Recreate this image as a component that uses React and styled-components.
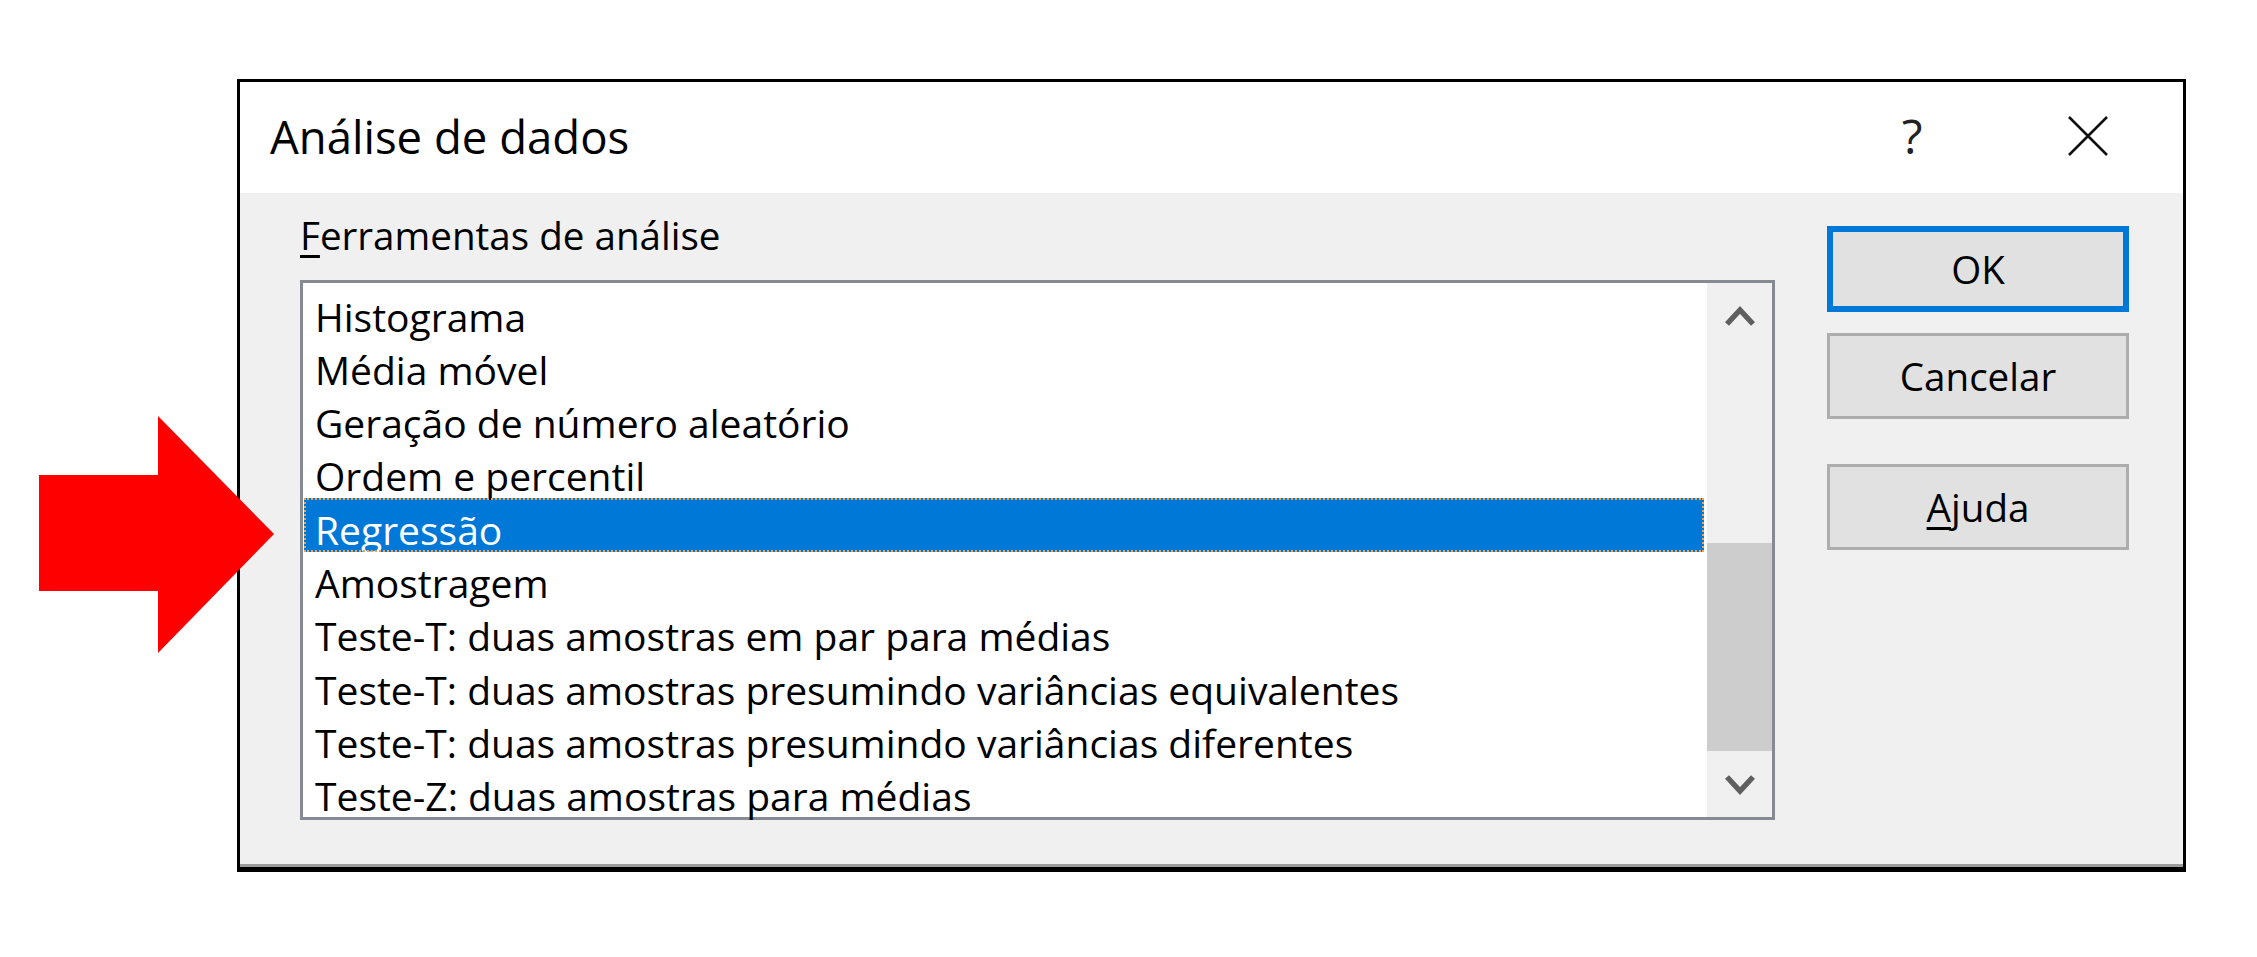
import React from "react";
import styled, { createGlobalStyle } from "styled-components";

const GlobalStyle = createGlobalStyle`
  html, body { margin: 0; padding: 0; background: #ffffff; }
  body { font-family: "Open Sans", "Noto Sans", sans-serif; }
  * { box-sizing: border-box; }
`;

const Page = styled.div`
  position: relative;
  width: 2257px;
  height: 957px;
  padding: 79px 0 0 237px;
`;

const ArrowMark = styled.svg`
  position: absolute;
  left: 39px;
  top: 416px;
  width: 235px;
  height: 237px;
  z-index: 2;
`;

const Dialog = styled.div`
  width: 1949px;
  height: 793px;
  border: 3px solid #000;
  border-bottom-width: 5px;
  display: flex;
  flex-direction: column;
  background: #f0f0f0;
  box-shadow: inset 0 -3px 0 #9c9c9c;
`;

const TitleBar = styled.div`
  height: 111px;
  flex: none;
  background: #ffffff;
  display: flex;
  align-items: center;
  padding-left: 30px;
`;

const Title = styled.div`
  flex: 1;
  font-size: 45.5px;
  color: #000;
  margin-top: -4px;
`;

const CaptionButton = styled.div`
  width: ${(p) => p.$w}px;
  margin-right: ${(p) => p.$mr || 0}px;
  display: flex;
  align-items: center;
  justify-content: center;
  color: #222;
  font-size: 48px;
  margin-top: -4px;
`;

const Body = styled.div`
  flex: 1;
  display: flex;
  padding: 16px 0 0 60px;
`;

const LeftColumn = styled.div`
  display: flex;
  flex-direction: column;
  width: 1475px;
`;

const Label = styled.div`
  font-size: 38.6px;
  line-height: 52px;
  color: #000;
  margin-bottom: 19px;
`;

const Mnemonic = styled.span`
  text-decoration: underline;
  text-decoration-thickness: 3px;
  text-underline-offset: 5px;
`;

const ListBox = styled.div`
  height: 540px;
  border: 3px solid #858a93;
  background: #ffffff;
  display: flex;
`;

const Items = styled.div`
  flex: 1;
  padding: 2px 3px 0 1px;
`;

const Item = styled.div`
  height: 53.33px;
  line-height: 48.33px;
  padding: 7.5px 0 0 11px;
  font-size: 39px;
  white-space: nowrap;
  color: ${(p) => (p.$selected ? "#ffffff" : "#000000")};
  background: ${(p) => (p.$selected ? "#0078d7" : "transparent")};
  outline: ${(p) => (p.$selected ? "2px dotted #f3a247" : "none")};
  outline-offset: -2px;
`;

const ScrollBar = styled.div`
  width: 65px;
  background: #f0f0f0;
  display: flex;
  flex-direction: column;
`;

const ScrollArrow = styled.div`
  height: 65px;
  flex: none;
  display: flex;
  align-items: center;
  justify-content: center;
`;

const Track = styled.div`
  flex: 1;
  padding-top: ${(p) => p.$offset}px;
`;

const Thumb = styled.div`
  height: ${(p) => p.$size}px;
  background: #cdcdcd;
`;

const ButtonColumn = styled.div`
  display: flex;
  flex-direction: column;
  margin-left: 52px;
  padding-top: 17px;
`;

const Button = styled.div`
  width: 302px;
  height: 86px;
  margin-bottom: ${(p) => p.$mb || 0}px;
  background: #e1e1e1;
  border: ${(p) => (p.$default ? "6px solid #0078d7" : "3px solid #adadad")};
  display: flex;
  align-items: center;
  justify-content: center;
  font-size: 38.6px;
  color: #000;
`;

const items = [
  "Histograma",
  "Média móvel",
  "Geração de número aleatório",
  "Ordem e percentil",
  "Regressão",
  "Amostragem",
  "Teste-T: duas amostras em par para médias",
  "Teste-T: duas amostras presumindo variâncias equivalentes",
  "Teste-T: duas amostras presumindo variâncias diferentes",
  "Teste-Z: duas amostras para médias",
];

const Chevron = ({ up }) => (
  <svg width="32" height="24" viewBox="0 0 32 24">
    <polyline
      points={up ? "3,20 16,6 29,20" : "3,4 16,18 29,4"}
      fill="none"
      stroke="#5f5f5f"
      strokeWidth="5.5"
    />
  </svg>
);

export default function App() {
  return (
    <>
      <GlobalStyle />
      <Page>
        <ArrowMark viewBox="0 0 235 237">
          <polygon
            points="0,59 119,59 119,0 235,118 119,237 119,175 0,175"
            fill="#ff0000"
          />
        </ArrowMark>
        <Dialog>
          <TitleBar>
            <Title>Análise de dados</Title>
            <CaptionButton $w={80} $mr={76}>?</CaptionButton>
            <CaptionButton $w={120} $mr={35}>
              <svg width="42" height="40" viewBox="0 0 42 40">
                <path d="M2 1 L40 39 M40 1 L2 39" stroke="#111" strokeWidth="2.6" />
              </svg>
            </CaptionButton>
          </TitleBar>
          <Body>
            <LeftColumn>
              <Label>
                <Mnemonic>F</Mnemonic>erramentas de análise
              </Label>
              <ListBox>
                <Items>
                  {items.map((t) => (
                    <Item key={t} $selected={t === "Regressão"}>
                      {t}
                    </Item>
                  ))}
                </Items>
                <ScrollBar>
                  <ScrollArrow>
                    <Chevron up />
                  </ScrollArrow>
                  <Track $offset={195}>
                    <Thumb $size={208} />
                  </Track>
                  <ScrollArrow>
                    <Chevron />
                  </ScrollArrow>
                </ScrollBar>
              </ListBox>
            </LeftColumn>
            <ButtonColumn>
              <Button $default $mb={21}>OK</Button>
              <Button $mb={45}>Cancelar</Button>
              <Button>
                <span>
                  <Mnemonic>A</Mnemonic>juda
                </span>
              </Button>
            </ButtonColumn>
          </Body>
        </Dialog>
      </Page>
    </>
  );
}
